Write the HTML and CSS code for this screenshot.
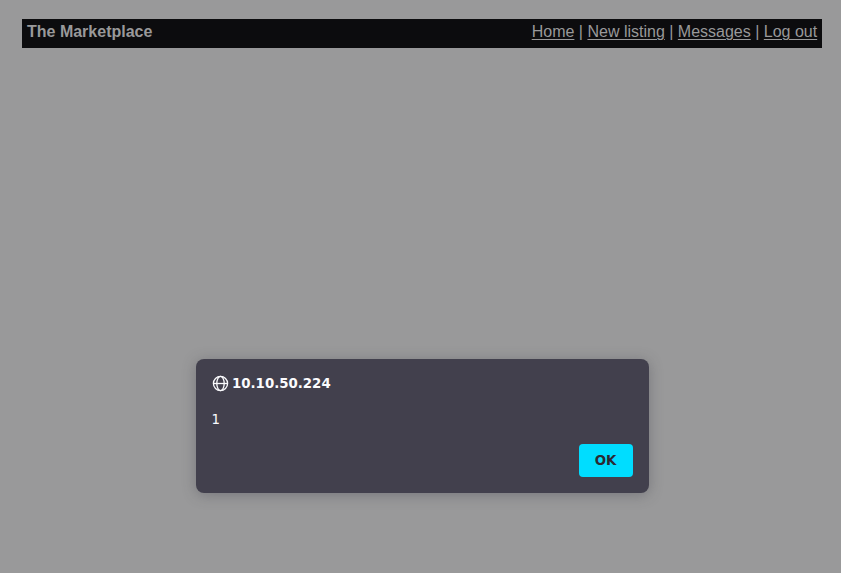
FILE: index.html
```html
<!DOCTYPE html>
<html lang="en">
<head>
<meta charset="utf-8">
<title>The Marketplace</title>
<link rel="stylesheet" href="styles.css">
</head>
<body>
<header class="navbar">
  <strong class="brand">The Marketplace</strong>
  <nav class="links"><a href="#">Home</a> | <a href="#">New listing</a> | <a href="#">Messages</a> | <a href="#">Log out</a></nav>
</header>
<div class="dialog" role="alertdialog">
  <div class="dialog-title">
    <svg class="globe" viewBox="0 0 17 17" fill="none" stroke="currentColor" stroke-width="1.3"><circle cx="8.5" cy="8.5" r="7.1"/><ellipse cx="8.5" cy="8.5" rx="3.7" ry="7.1"/><path d="M1.5 8.5h14"/></svg>
    <span>10.10.50.224</span>
  </div>
  <div class="message">1</div>
  <div class="actions"><button class="ok">OK</button></div>
</div>
</body>
</html>
```
FILE: styles.css
```css
* { box-sizing: border-box; }
body {
  margin: 0;
  height: 573px;
  padding: 19px 19px 0 22px;
  overflow: hidden;
  background: #99999a;
  font: 16px/18px "Liberation Sans", Arial, sans-serif;
}
.navbar {
  display: flex;
  justify-content: space-between;
  height: 29px;
  padding: 4px 4.8px 4px 5px;
  background: #0c0c0e;
  color: #99999a;
}
.links a {
  color: inherit;
  text-decoration-thickness: 1px;
  text-underline-offset: 2px;
}
.dialog {
  position: absolute;
  left: 196px;
  top: 359px;
  width: 453px;
  height: 134px;
  padding: 16px;
  border-radius: 8px;
  background: #42404d;
  color: #fbfbfe;
  box-shadow: 0 2px 14px rgba(58, 57, 68, .35);
  font: 13.33px/17px "DejaVu Sans", sans-serif;
}
.dialog-title {
  display: flex;
  align-items: center;
  gap: 3px;
  height: 17px;
  font-weight: bold;
}
.globe { width: 17px; height: 17px; }
.message { margin: 19px 0 0 -0.5px; height: 17px; }
.actions { display: flex; justify-content: flex-end; margin-top: 16px; }
.ok {
  width: 54px;
  height: 33px;
  padding: 0 1px 0 0;
  border: 0;
  border-radius: 4px;
  background: #00ddff;
  color: #2b2a33;
  font: bold 13.33px/17px "DejaVu Sans", sans-serif;
}
```
